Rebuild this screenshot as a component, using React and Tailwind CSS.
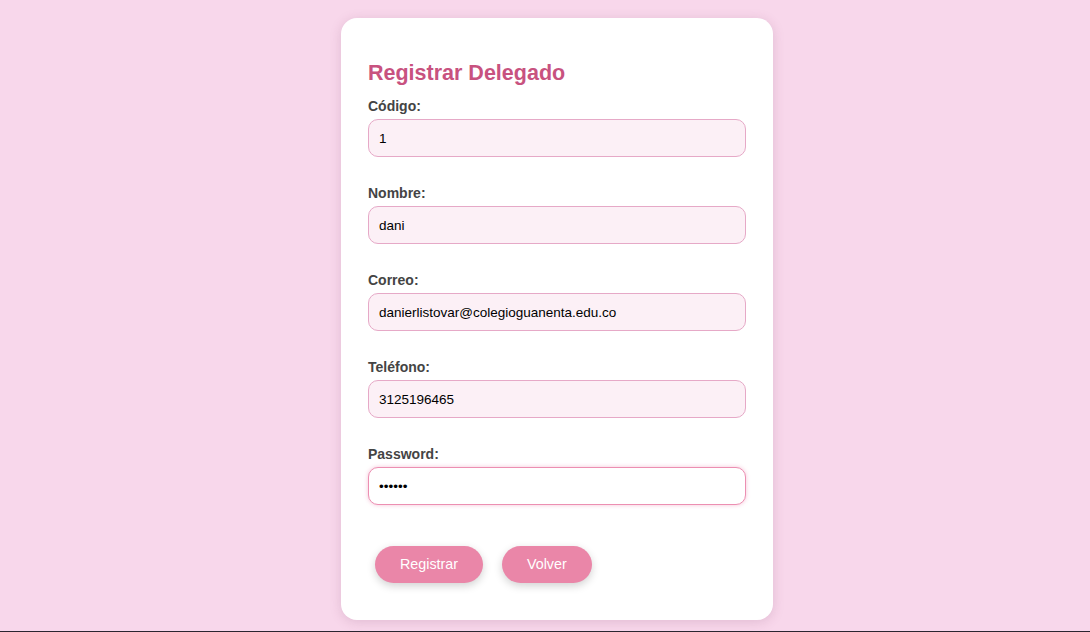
import { useState } from "react";

const fields = [
    { id: "codigo", label: "Código:", value: "1", type: "text" },
    { id: "nombre", label: "Nombre:", value: "dani", type: "text" },
    { id: "correo", label: "Correo:", value: "danierlistovar@colegioguanenta.edu.co", type: "text" },
    { id: "telefono", label: "Teléfono:", value: "3125196465", type: "text" },
    { id: "password", label: "Password:", value: "123456", type: "password", focused: true },
];

export default function App() {
    const [form, setForm] = useState(
        Object.fromEntries(fields.map((f) => [f.id, f.value]))
    );

    return (
        <div className="h-[632px] flex flex-col bg-[#f8d7eb] font-['Liberation_Sans',Arial,sans-serif]">
            <div className="flex-1 flex justify-center pl-[24px]">
                <div className="w-[432px] h-[602px] mt-[18px] bg-white rounded-[16px] shadow-[0_2px_12px_rgba(120,60,100,0.18)] px-[27px] pt-[43px] pb-[37px]">
                    <h2 className="text-[21.5px] leading-[25px] font-bold text-[#c8527f] mb-[12px]">
                        Registrar Delegado
                    </h2>

                    <form onSubmit={(e) => e.preventDefault()}>
                        {fields.map((f, i) => (
                            <div key={f.id} className={i === fields.length - 1 ? "" : "mb-[28px]"}>
                                <label
                                    htmlFor={f.id}
                                    className="block text-[14px] leading-[16px] font-bold text-[#444444] mb-[5px]"
                                >
                                    {f.label}
                                </label>
                                <input
                                    id={f.id}
                                    type={f.type}
                                    value={form[f.id]}
                                    onChange={({ target }) => setForm({ ...form, [f.id]: target.value })}
                                    className={
                                        f.focused
                                            ? "block w-full h-[38px] rounded-[10px] border border-[#ec8fb2] bg-white pl-[10px] text-[13.5px] text-black outline-none shadow-[0_0_4px_rgba(236,120,165,0.45)]"
                                            : "block w-full h-[38px] rounded-[10px] border border-[#e6a9c7] bg-[#fcf0f6] pl-[10px] text-[13.5px] text-black outline-none"
                                    }
                                />
                            </div>
                        ))}

                        <div className="flex gap-[19px] mt-[41px] ml-[7px]">
                            <button
                                type="submit"
                                className="h-[37px] px-[25px] rounded-full bg-[#ea86a8] text-white text-[14.3px] shadow-[0_3px_8px_rgba(0,0,0,0.18)]"
                            >
                                Registrar
                            </button>
                            <button
                                type="button"
                                className="h-[37px] px-[25px] rounded-full bg-[#ea86a8] text-white text-[14.3px] shadow-[0_3px_8px_rgba(0,0,0,0.18)]"
                            >
                                Volver
                            </button>
                        </div>
                    </form>
                </div>
            </div>
            <div className="h-px bg-[#2b2530]" />
        </div>
    );
}
